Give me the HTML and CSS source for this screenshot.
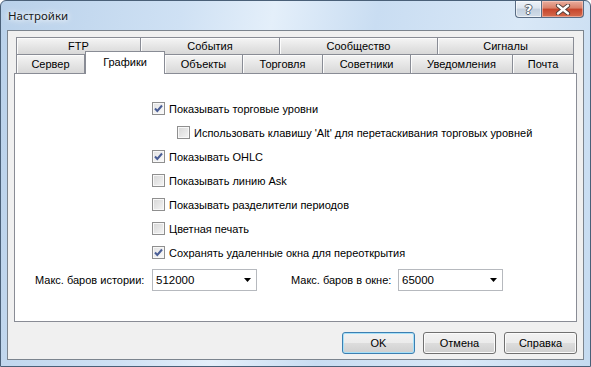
FILE: index.html
```html
<!DOCTYPE html>
<html lang="ru">
<head>
  <meta charset="UTF-8" />
  <title>Настройки</title>
  <link rel="stylesheet" href="styles.css">
</head>
<body>

  <div class="window">
    <div class="titlebar">
      <span class="title">Настройки</span>
      <div class="caption-buttons">
        <div class="cap help">?</div>
        <div class="cap close">
          <svg width="16" height="11" viewBox="0 0 16 11">
            <path d="M3 1.5 L13 9.5 M13 1.5 L3 9.5" stroke="#4b3a36" stroke-width="4.2" stroke-linecap="round"/>
            <path d="M3 1.5 L13 9.5 M13 1.5 L3 9.5" stroke="#fff" stroke-width="2.4" stroke-linecap="round"/>
          </svg>
        </div>
      </div>
    </div>

    <div class="client">
      <div class="tabs">
        <div class="tab-row row-top">
          <div class="tab">FTP</div>
          <div class="tab">События</div>
          <div class="tab">Сообщество</div>
          <div class="tab">Сигналы</div>
        </div>
        <div class="tab-row row-bottom">
          <div class="tab">Сервер</div>
          <div class="tab active">Графики</div>
          <div class="tab">Объекты</div>
          <div class="tab">Торговля</div>
          <div class="tab">Советники</div>
          <div class="tab">Уведомления</div>
          <div class="tab">Почта</div>
        </div>
      </div>

      <div class="panel">
        <div class="options">
          <div class="option"><span class="checkbox checked"><svg width="11" height="11" viewBox="0 0 11 11"><path d="M2 5.5 L4.3 8 L9 2.5" fill="none" stroke="#4a5e96" stroke-width="2"/></svg></span>Показывать торговые уровни</div>
          <div class="option nested"><span class="checkbox"></span>Использовать клавишу 'Alt' для перетаскивания торговых уровней</div>
          <div class="option"><span class="checkbox checked"><svg width="11" height="11" viewBox="0 0 11 11"><path d="M2 5.5 L4.3 8 L9 2.5" fill="none" stroke="#4a5e96" stroke-width="2"/></svg></span>Показывать OHLC</div>
          <div class="option"><span class="checkbox"></span>Показывать линию Ask</div>
          <div class="option"><span class="checkbox"></span>Показывать разделители периодов</div>
          <div class="option"><span class="checkbox"></span>Цветная печать</div>
          <div class="option"><span class="checkbox checked"><svg width="11" height="11" viewBox="0 0 11 11"><path d="M2 5.5 L4.3 8 L9 2.5" fill="none" stroke="#4a5e96" stroke-width="2"/></svg></span>Сохранять удаленные окна для переоткрытия</div>
        </div>

        <div class="limits">
          <span class="limit-label">Макс. баров истории:</span>
          <div class="combo"><span>512000</span><svg width="7" height="4" viewBox="0 0 7 4"><path d="M0 0 H7 L3.5 4 Z" fill="#000"/></svg></div>
          <span class="limit-label second">Макс. баров в окне:</span>
          <div class="combo"><span>65000</span><svg width="7" height="4" viewBox="0 0 7 4"><path d="M0 0 H7 L3.5 4 Z" fill="#000"/></svg></div>
        </div>
      </div>

      <div class="actions">
        <div class="button default">OK</div>
        <div class="button">Отмена</div>
        <div class="button">Справка</div>
      </div>
    </div>
  </div>

</body>
</html>
```

FILE: styles.css
```css
body {
  margin: 0;
  font-family: "Liberation Sans", Arial, sans-serif;
  font-size: 11px;
  color: #000;
  background: #fff;
}
.window {
  width: 591px;
  height: 367px;
  box-sizing: border-box;
  border: 1px solid #4a6078;
  border-radius: 6px 6px 0 0;
  background: linear-gradient(100deg, #b9d1ea 0%, #cfe1f4 28%, #e4effa 42%, #c9ddf2 58%, #d9e8f7 80%, #c4daf0 100%);
  display: flex;
  flex-direction: column;
}
.titlebar {
  height: 29px;
  flex-shrink: 0;
  display: flex;
  align-items: flex-start;
}
.title {
  padding: 7px 0 0 7px;
  font-family: "Noto Sans", "Liberation Sans", sans-serif;
  font-size: 11.5px;
  line-height: 15px;
  color: #1b1b1b;
  text-shadow: 0 0 5px #fff, 0 0 8px #fff;
}
.caption-buttons {
  margin-left: auto;
  margin-right: 6px;
  display: flex;
}
.cap {
  height: 17px;
  box-sizing: border-box;
  border: 1px solid #596c84;
  border-top: 0;
  display: flex;
  align-items: center;
  justify-content: center;
}
.help {
  width: 26px;
  border-right: 0;
  border-radius: 0 0 0 4px;
  background: linear-gradient(#eef3f9, #dce5ef 45%, #c2cfde 50%, #d2dde9);
  box-shadow: inset 0 0 0 1px rgba(255,255,255,0.6);
  font-family: "DejaVu Sans", sans-serif;
  font-size: 13px;
  font-weight: bold;
  color: #fff;
  text-shadow: 1px 0 #56606c, -1px 0 #56606c, 0 1px #56606c, 0 -1px #56606c;
}
.close {
  width: 43px;
  border-radius: 0 0 4px 0;
  background: linear-gradient(#eaae9f, #d98069 45%, #c6442b 50%, #d56c4e);
  box-shadow: inset 0 0 0 1px rgba(255,220,210,0.5);
}
.client {
  height: 330px;
  margin: 0 6px;
  box-sizing: border-box;
  border: 1px solid #7b848e;
  background: #f0f0f0;
  padding: 6px 6px 0;
  display: flex;
  flex-direction: column;
}
.tabs {
  margin: 0 2px;
}
.tab-row {
  display: flex;
}
.row-top {
  height: 17px;
}
.row-bottom {
  height: 19px;
  align-items: flex-end;
}
.tab {
  height: 100%;
  box-sizing: border-box;
  border: 1px solid #898c95;
  border-bottom: 0;
  border-left: 0;
  background: linear-gradient(#f5f5f5, #e6e6e6 50%, #d8d8d8);
  box-shadow: inset 1px 1px 0 #fcfcfc;
  display: flex;
  align-items: center;
  justify-content: center;
  line-height: 13px;
}
.tab:first-child {
  border-left: 1px solid #898c95;
}
.row-top .tab:nth-child(1) { width: 125px; }
.row-top .tab:nth-child(2) { width: 139px; }
.row-top .tab:nth-child(3) { width: 158px; }
.row-top .tab:nth-child(4) { width: 136px; }
.row-bottom .tab:nth-child(1) { width: 69px; }
.row-bottom .tab:nth-child(2) { width: 80px; }
.row-bottom .tab:nth-child(3) { width: 78px; }
.row-bottom .tab:nth-child(4) { width: 80px; }
.row-bottom .tab:nth-child(5) { width: 88px; }
.row-bottom .tab:nth-child(6) { width: 102px; }
.row-bottom .tab:nth-child(7) { width: 61px; }
.tab.active {
  height: 23px;
  margin-bottom: -1px;
  position: relative;
  z-index: 1;
  background: #fff;
  box-shadow: none;
  border-left: 1px solid #898c95;
  align-items: flex-start;
  padding-top: 4px;
}
.panel {
  height: 249px;
  box-sizing: border-box;
  border: 1px solid #898c95;
  background: #fff;
}
.options {
  padding: 28px 0 0 137px;
  display: flex;
  flex-direction: column;
  gap: 11px;
}
.option {
  height: 13px;
  display: flex;
  align-items: center;
  gap: 4px;
  white-space: nowrap;
}
.option.nested {
  margin-left: 25px;
}
.checkbox {
  width: 13px;
  height: 13px;
  box-sizing: border-box;
  border: 1px solid #8f8f8f;
  background: linear-gradient(135deg, #d6d6d6, #f5f5f5);
  box-shadow: inset 0 0 0 1px #f8f8f8;
  display: flex;
  align-items: center;
  justify-content: center;
  flex-shrink: 0;
}
.checkbox.checked {
  background: linear-gradient(135deg, #e2e2e2, #fbfbfb);
}
.limits {
  margin-top: 10px;
  padding-left: 20px;
  display: flex;
  align-items: center;
}
.limit-label {
  width: 117px;
  white-space: nowrap;
}
.limit-label.second {
  margin-left: 34px;
  width: 107px;
}
.combo {
  width: 105px;
  height: 22px;
  box-sizing: border-box;
  border: 1px solid #b6b9be;
  background: #fff;
  display: flex;
  align-items: center;
  justify-content: space-between;
  padding: 0 5px 0 3px;
  font-size: 11.5px;
}
.actions {
  margin-top: 10px;
  display: flex;
  justify-content: flex-end;
  gap: 8px;
}
.button {
  width: 73px;
  height: 22px;
  box-sizing: border-box;
  border: 1px solid #707070;
  border-radius: 3px;
  background: linear-gradient(#f2f2f2, #ebebeb 50%, #dddddd 50%, #cfcfcf);
  box-shadow: inset 0 0 0 1px #fbfbfb;
  display: flex;
  align-items: center;
  justify-content: center;
}
.button.default {
  border-color: #3c7fb1;
  box-shadow: inset 0 0 0 1px #a6e0f8;
}
```
